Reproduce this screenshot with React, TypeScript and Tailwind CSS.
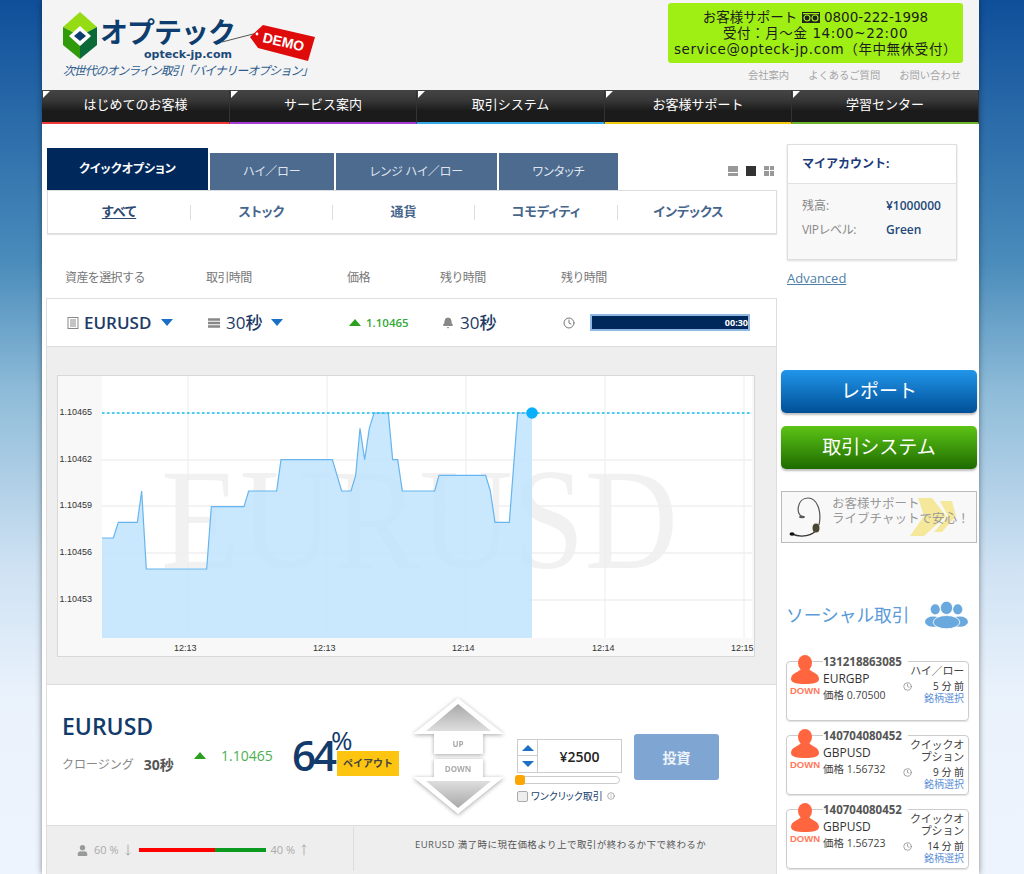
import { Bell, Clock, Info, MoveDown, MoveUp } from 'lucide-react';
import { FaUser } from 'react-icons/fa';

const navItems = [
  { label: 'はじめてのお客様', border: 'border-[#f03a3a]' },
  { label: 'サービス案内', border: 'border-[#a63bd8]' },
  { label: '取引システム', border: 'border-[#35a8e8]' },
  { label: 'お客様サポート', border: 'border-[#f2c80f]' },
  { label: '学習センター', border: 'border-[#6cb52d]' },
];

const categories = ['すべて', 'ストック', '通貨', 'コモディティ', 'インデックス'];

const trades = [
  { id: '131218863085', pair: 'EURGBP', price: '0.70500', kind: 'ハイ／ロー', ago: '5 分 前' },
  { id: '140704080452', pair: 'GBPUSD', price: '1.56732', kind: 'クイックオプション', ago: '9 分 前' },
  { id: '140704080452', pair: 'GBPUSD', price: '1.56723', kind: 'クイックオプション', ago: '14 分 前' },
];

// traced from the reference, in px relative to the chart box
const line = [
  [156, 504], [190, 504], [205, 457], [262, 457], [275, 363], [289, 597], [470, 597], [484, 410],
  [582, 410], [596, 363], [680, 363], [693, 269], [847, 269], [875, 363], [903, 363], [917, 316],
  [930, 175], [944, 269], [958, 175], [972, 129], [1015, 129], [1028, 269], [1043, 269], [1057, 363],
  [1154, 363], [1167, 316], [1307, 316], [1321, 363], [1335, 457], [1378, 457], [1403, 129], [1446, 129],
].map(([x, y]) => [x / 3 - 8, y / 3 - 6]);

function Chart() {
  const pts = line.map(([x, y]) => `${x},${y}`).join(' ');
  const yLabels = [
    ['1.10465', 37],
    ['1.10462', 84],
    ['1.10459', 130],
    ['1.10456', 177],
    ['1.10453', 224],
  ] as const;
  const xLabels = [
    ['12:13', 130, 128],
    ['12:13', 269, 267],
    ['12:14', 408, 406],
    ['12:14', 547, 546],
    ['12:15', 686, 685],
  ] as const;

  return (
    <svg width="696" height="280" className="block border border-[#d8d8d8] box-content">
      <rect width="696" height="280" fill="#f8f8f8" />
      <rect x="44" y="0" width="650" height="262" fill="#fff" />
      <text x="103" y="192" fontFamily="Liberation Serif" fontSize="143" fill="#000" opacity="0.05" textLength="517" lengthAdjust="spacingAndGlyphs">
        EURUSD
      </text>
      {xLabels.map(([, x]) => (
        <line key={x} x1={x} x2={x} y1="0" y2="262" stroke="#ececec" />
      ))}
      {yLabels.map(([, y]) => (
        <line key={y} x1="44" x2="694" y1={y} y2={y} stroke="#efefef" strokeWidth="1.5" />
      ))}
      <polygon points={`44,262 ${pts} 474,262`} fill="#bfe3fd" fillOpacity="0.85" />
      <polyline points={pts} fill="none" stroke="#66b5ee" strokeWidth="1.2" />
      <line x1="44" x2="694" y1="37" y2="37" stroke="#10c0f5" strokeWidth="1.6" strokeDasharray="2.5 2.5" />
      <circle cx="474" cy="37" r="5.8" fill="#0bb0fb" />
      {yLabels.map(([t, y]) => (
        <text key={y} x="1.5" y={y + 2} fontSize="9" fill="#333" fontFamily="Liberation Sans">
          {t}
        </text>
      ))}
      {xLabels.map(([t, , x], i) => (
        <text key={i} x={x - 12} y="275" fontSize="9" fill="#333" fontFamily="Liberation Sans">
          {t}
        </text>
      ))}
    </svg>
  );
}

function UpDown() {
  return (
    <svg width="96" height="122" className="drop-shadow-[0_1px_2px_rgba(0,0,0,0.35)]">
      <defs>
        <linearGradient id="ug" x1="0" y1="0" x2="0" y2="1">
          <stop offset="0" stopColor="#a8a8a8" />
          <stop offset="1" stopColor="#dedede" />
        </linearGradient>
        <linearGradient id="dg" x1="0" y1="0" x2="0" y2="1">
          <stop offset="0" stopColor="#dedede" />
          <stop offset="1" stopColor="#a8a8a8" />
        </linearGradient>
      </defs>
      <polygon points="47,2 93,38 72,38 72,58 23,58 23,38 2,38" fill="#fff" />
      <polygon points="47,8 80,35 15,35" fill="url(#ug)" />
      <polygon points="23,63 72,63 72,81 93,81 47,118 2,81 23,81" fill="#fff" />
      <polygon points="15,85 80,85 47,112" fill="url(#dg)" />
      <text x="47" y="51" textAnchor="middle" fontSize="8" fontWeight="700" fill="#aaa" fontFamily="Open Sans">UP</text>
      <text x="47" y="76" textAnchor="middle" fontSize="8" fontWeight="700" fill="#aaa" fontFamily="Open Sans">DOWN</text>
    </svg>
  );
}

function Logo() {
  return (
    <svg width="34" height="48" viewBox="0 0 34 48" className="shrink-0">
      <polygon points="17,0 34,15 17,24 0,15" fill="#96dc14" />
      <polygon points="0,15 17,24 17,47 0,33" fill="#2f9a0a" />
      <polygon points="34,15 17,24 17,47 34,33" fill="#0b6a38" />
      <polygon points="17,14 28,24 17,34 6,24" fill="#fff" />
      <polygon points="17,19 23,24 17,29 11,24" fill="#0d3d6e" />
    </svg>
  );
}

function Headset() {
  return (
    <svg width="36" height="42" viewBox="0 0 36 42" fill="none">
      <path d="M14 20 C6 18 8 1 19 1 C28 1 33 14 30 28" stroke="#555" strokeWidth="1.2" />
      <path d="M3 37 C12 41 24 39 28 32" stroke="#333" strokeWidth="1.4" />
      <ellipse cx="27" cy="31" rx="3.5" ry="4.5" fill="#4a4630" />
      <ellipse cx="3" cy="37" rx="2.5" ry="1.8" fill="#111" />
      <ellipse cx="13" cy="20" rx="3" ry="1.3" fill="#555" />
    </svg>
  );
}

function Dial() {
  return (
    <svg width="18" height="11" viewBox="0 0 18 11" className="inline-block align-[-1px]">
      <rect width="18" height="11" fill="#222" />
      <circle cx="5" cy="6" r="3" fill="none" stroke="#a0ef14" strokeWidth="1.2" />
      <circle cx="13" cy="6" r="3" fill="none" stroke="#a0ef14" strokeWidth="1.2" />
      <rect x="1" y="1" width="16" height="1.2" fill="#a0ef14" />
    </svg>
  );
}

function Avatar() {
  return (
    <svg width="28" height="29" viewBox="0 0 28 29">
      <ellipse cx="14" cy="8" rx="7" ry="8" fill="#ff6640" />
      <path d="M0 24 C0 18 8 17 10 14 H18 C20 17 28 18 28 24 C28 28 22 29 14 29 C6 29 0 28 0 24Z" fill="#ff6640" />
    </svg>
  );
}

function People() {
  return (
    <svg width="43" height="28" viewBox="0 0 42 27">
      <ellipse cx="10" cy="8" rx="4.5" ry="5" fill="#6aa9dd" />
      <ellipse cx="32" cy="8" rx="4.5" ry="5" fill="#6aa9dd" />
      <ellipse cx="8" cy="20" rx="8" ry="5" fill="#6aa9dd" />
      <ellipse cx="34" cy="20" rx="8" ry="5" fill="#6aa9dd" />
      <ellipse cx="21" cy="6.5" rx="6" ry="6.5" fill="#6aa9dd" stroke="#fff" strokeWidth="0.8" />
      <ellipse cx="21" cy="20.5" rx="13" ry="6.5" fill="#6aa9dd" stroke="#fff" strokeWidth="0.8" />
    </svg>
  );
}

function Caret({ className }: { className: string }) {
  return <span className={`inline-block w-0 h-0 border-l-[6.5px] border-r-[6.5px] border-t-[7px] border-l-transparent border-r-transparent border-t-[#1b6fc4] ${className}`} />;
}

function GreenUp() {
  return <span className="inline-block w-0 h-0 border-l-[6px] border-r-[6px] border-b-[7px] border-l-transparent border-r-transparent border-b-[#2ca01c]" />;
}

function ListIcon() {
  return (
    <svg width="12" height="12" viewBox="0 0 12 12" className="shrink-0">
      <rect x="1" y="0.5" width="10" height="11" fill="none" stroke="#888" />
      <path d="M3 3h6M3 5h6M3 7h6M3 9h6" stroke="#888" />
    </svg>
  );
}

function StackIcon() {
  return (
    <svg width="12" height="10" viewBox="0 0 12 10" className="shrink-0">
      <path d="M0 1.5h12M0 5h12M0 8.5h12" stroke="#888" strokeWidth="2.4" />
    </svg>
  );
}

function TradeCard({ id, pair, price, kind, ago }: (typeof trades)[number]) {
  return (
    <div className="relative h-[60px] w-[183px] ml-[5px] mb-[14px] border border-[#ccc] rounded-[4px] shadow-[0_1px_1px_rgba(0,0,0,0.12)] flex">
      <div className="w-[32px] ml-[2px] -mt-[7px] flex flex-col items-center shrink-0">
        <Avatar />
        <span className="text-[9.5px] leading-[10px] mt-[2px] font-bold text-[#ff7a5c] font-['Liberation_Sans',sans-serif]">DOWN</span>
      </div>
      <div className="ml-[2px] -mt-[6px] w-[84px] shrink-0">
        <div className="text-[11.5px] leading-[12px] font-bold text-[#555] bg-white pr-[6px] w-fit">{id}</div>
        <div className="text-[12px] leading-[14px] mt-[4px] text-[#333]">{pair}</div>
        <div className="text-[10.5px] leading-[14px] mt-[2px] text-[#444]">価格 {price}</div>
      </div>
      <div className="flex-1 -ml-[3px] pr-[5px] pt-[3px] text-right text-[11px]">
        <div className="leading-[12px] text-[#444] w-[60px] ml-auto tracking-[-0.2px]">{kind}</div>
        <div className="flex justify-between items-center leading-[13px] mt-[3px] text-[#333]">
          <Clock className="w-[9px] h-[9px] text-[#888] -ml-[1px]" />
          <span className="text-[10px]">{ago}</span>
        </div>
        <div className="text-[10px] leading-[11px] text-[#5c8fd6]">銘柄選択</div>
      </div>
    </div>
  );
}

export default function App() {
  return (
    <div className="h-screen overflow-hidden bg-[linear-gradient(180deg,#0f4f9a_0%,#4a8cbb_30%,#8fbcd9_45%,#cfe2f3_65%,#eaf2fc_80%,#eef4fd_100%)] font-['Open_Sans','Noto_Sans_CJK_JP',sans-serif]">
      <div className="w-[937px] ml-[42px] h-full bg-white shadow-[0_0_6px_rgba(0,0,0,0.45)]">
        {/* header */}
        <header className="h-[90px] bg-[#f4f4f4] flex justify-between">
          <div className="pl-[21px] pt-[12px] relative w-[300px]">
            <div className="flex items-start">
              <Logo />
              <div className="ml-[3px] mt-[2px]">
                <div className="text-[28px] leading-[36px] font-bold text-[#0d3d6e] tracking-[-1px] whitespace-nowrap">オプテック</div>
                <div className="text-[11px] leading-[10px] font-bold text-[#1d4a78] ml-[44px] font-['DejaVu_Sans',sans-serif] whitespace-nowrap">opteck-jp.com</div>
              </div>
            </div>
            <div className="text-[12px] leading-[14px] italic text-[#2d5c8c] mt-[4px] whitespace-nowrap tracking-[-1.15px]">次世代のオンライン取引「バイナリーオプション」</div>
            {/* demo tag */}
            <svg width="92" height="44" viewBox="0 0 92 44" className="absolute left-[182px] top-[22px] overflow-visible">
              <path d="M-2 20 L33 11" stroke="#555" strokeWidth="1" />
              <polygon points="26,15 39,3 91,15 84,39 34,26" fill="#df0a0a" />
              <circle cx="33" cy="12" r="1.4" fill="#fff" />
              <text x="38" y="20" fontSize="14" fontWeight="700" fill="#fff" fontFamily="Liberation Sans" transform="rotate(13 38 20)">DEMO</text>
            </svg>
          </div>
          <div className="pr-[16px] pt-[3px] flex flex-col items-end">
            <div className="w-[295px] h-[60px] bg-[#a0ef14] rounded-[3px] text-center text-[13.5px] leading-[16px] pt-[6px] text-[#1c1c1c] font-['DejaVu_Sans','Noto_Sans_CJK_JP',sans-serif] whitespace-nowrap">
              <div>お客様サポート <Dial /> 0800-222-1998</div>
              <div className="tracking-[0.6px]">受付：月～金 14:00~22:00</div>
              <div className="tracking-[0.6px]">service@opteck-jp.com（年中無休受付）</div>
            </div>
            <div className="flex gap-[19px] text-[10.3px] leading-[12px] mt-[6px] text-[#a5a5a5] pr-[2px]">
              <span>会社案内</span>
              <span>よくあるご質問</span>
              <span>お問い合わせ</span>
            </div>
          </div>
        </header>

        {/* nav */}
        <nav className="grid grid-cols-[188px_187px_188px_187px_187px] h-[34px]">
          {navItems.map((item) => (
            <div
              key={item.label}
              className={`relative flex items-center justify-center pb-[2px] text-white text-[13px] border-b-2 border-r border-r-[#333] bg-[linear-gradient(180deg,#454444_0%,#3a3939_30%,#1b1b1b_65%,#1a1a1a_100%)] ${item.border}`}
            >
              <span className="absolute left-[1px] top-px w-0 h-0 border-t-[7px] border-r-[7px] border-t-white border-r-transparent" />
              {item.label}
            </div>
          ))}
        </nav>

        <div className="flex">
          {/* left column */}
          <main className="w-[731px] ml-[4px] shrink-0">
            <div className="flex items-end mt-[24px] ml-px gap-[2px] [font-feature-settings:'palt']">
              <div className="w-[161px] h-[42px] bg-[#00285a] text-white text-[12px] font-bold flex items-center justify-center">クイックオプション</div>
              <div className="w-[124px] h-[37px] bg-[#4d6a8f] text-[#dfe5ee] text-[12px] flex items-center justify-center">ハイ／ロー</div>
              <div className="w-[161px] h-[37px] bg-[#4d6a8f] text-[#dfe5ee] text-[12px] flex items-center justify-center">レンジ ハイ／ロー</div>
              <div className="w-[119px] h-[37px] bg-[#4d6a8f] text-[#dfe5ee] text-[12px] flex items-center justify-center">ワンタッチ</div>
              <div className="flex-1 flex justify-end items-center gap-[8px] h-[37px] pr-[3px] pb-[2px]">
                <span className="w-[10px] h-[10px] bg-[linear-gradient(180deg,#999_0%,#999_55%,#fff_55%,#fff_68%,#999_68%)]" />
                <span className="w-[10px] h-[10px] bg-[#333]" />
                <span className="w-[10px] h-[10px] grid grid-cols-2 gap-px">
                  <span className="bg-[#999]" />
                  <span className="bg-[#999]" />
                  <span className="bg-[#999]" />
                  <span className="bg-[#999]" />
                </span>
              </div>
            </div>
            <div className="ml-px grid grid-cols-[143px_142px_142px_143px_1fr] pr-[17px] h-[44px] border border-[#ddd] shadow-[0_1px_1px_rgba(0,0,0,0.1)] items-center [font-feature-settings:'palt']">
              {categories.map((c, i) => (
                <div key={c} className={`h-[15px] flex items-center justify-center text-[13px] font-bold text-[#46658c] ${i < 4 ? 'border-r border-[#ddd]' : ''}`}>
                  <span className={i === 0 ? 'underline underline-offset-2 text-[#2c4a72]' : ''}>{c}</span>
                </div>
              ))}
            </div>

            <div className="grid grid-cols-[141px_141px_93px_121px_1fr] pl-[19px] h-[64px] items-center pt-[24px] text-[12px] text-[#777] tracking-[-0.6px]">
              <span>資産を選択する</span>
              <span>取引時間</span>
              <span>価格</span>
              <span>残り時間</span>
              <span>残り時間</span>
            </div>

            <div className="border border-[#ddd] border-b-0">
              <div className="grid grid-cols-[141px_141px_93px_121px_1fr] pl-[20px] h-[48px] items-center border-b border-[#ddd] text-[#1e3a66]">
                <div className="flex items-center">
                  <ListIcon />
                  <span className="ml-[5px] text-[17px] font-semibold">EURUSD</span>
                  <Caret className="ml-[10px]" />
                </div>
                <div className="flex items-center">
                  <StackIcon />
                  <span className="ml-[6px] text-[17px] font-medium">30秒</span>
                  <Caret className="ml-[9px]" />
                </div>
                <div className="flex items-center text-[11.5px] font-semibold text-[#35a838]">
                  <GreenUp />
                  <span className="ml-[5px]">1.10465</span>
                </div>
                <div className="flex items-center">
                  <Bell className="w-[12px] h-[12px] text-[#888] fill-[#888]" />
                  <span className="ml-[6px] text-[17px] font-medium">30秒</span>
                </div>
                <div className="flex items-center">
                  <Clock className="w-[12px] h-[12px] text-[#777]" />
                  <div className="ml-[15px] w-[160px] h-[17px] border-2 border-[#8fb9e2] bg-[#00285a] text-white text-[9px] leading-[13px] font-bold text-right">00:30</div>
                </div>
              </div>
              <div className="bg-[#eeeeee] h-[338px] pt-[28px] pl-[10px] border-b border-[#ddd]">
                <Chart />
              </div>
              <div className="h-[141px] flex border-b border-[#ddd]">
                <div className="w-[130px] shrink-0 pl-[15px] pt-[26px]">
                  <div className="text-[23px] leading-[30px] font-semibold text-[#123a6b]">EURUSD</div>
                  <div className="flex mt-[15px] text-[12px] leading-[18px] whitespace-nowrap">
                    <span className="text-[#888]">クロージング</span>
                    <span className="ml-[10px] font-bold text-[#555] text-[14px]">30秒</span>
                  </div>
                </div>
                <div className="w-[115px] shrink-0 pt-[61px] pl-[17px] flex items-start text-[14px] leading-[20px] text-[#4cb050]">
                  <span className="mt-[6px] flex"><GreenUp /></span>
                  <span className="ml-[15px]">1.10465</span>
                </div>
                <div className="relative w-[119px] shrink-0">
                  <span className="absolute left-0 top-[41px] text-[42px] leading-[58px] font-semibold text-[#123a6b] tracking-[-3px]">64</span>
                  <span className="absolute left-[39px] top-[40px] text-[26px] leading-[30px] text-[#123a6b] tracking-[-1px]">%</span>
                  <span className="absolute left-[45px] top-[66px] w-[62px] h-[25px] bg-[#fdc50f] text-[10px] font-bold text-[#444] flex items-center justify-center">ペイアウト</span>
                </div>
                <div className="w-[106px] shrink-0 pt-[11px]">
                  <UpDown />
                </div>
                <div className="w-[117px] shrink-0 pt-[54px]">
                  <div className="w-[105px] h-[34px] border border-[#ccc] flex">
                    <div className="w-[20px] border-r border-[#ccc] flex flex-col">
                      <div className="h-1/2 border-b border-[#ccc] flex items-center justify-center">
                        <span className="w-0 h-0 border-l-[6px] border-r-[6px] border-b-[6px] border-l-transparent border-r-transparent border-b-[#1b6fc4]" />
                      </div>
                      <div className="h-1/2 flex items-center justify-center">
                        <span className="w-0 h-0 border-l-[6px] border-r-[6px] border-t-[6px] border-l-transparent border-r-transparent border-t-[#1b6fc4]" />
                      </div>
                    </div>
                    <div className="flex-1 flex items-center justify-center text-[14px] font-semibold text-[#222]">¥2500</div>
                  </div>
                  <div className="relative -ml-[2px] w-[105px] h-[8px] mt-[3px] border border-[#ccc] rounded-full">
                    <span className="absolute -left-px -top-[2px] w-[10px] h-[10px] rounded-[3px] bg-[#f9a606]" />
                  </div>
                  <div className="flex items-center mt-[6px] whitespace-nowrap">
                    <span className="w-[11px] h-[11px] border border-[#aaa] rounded-[2px] bg-[#eee]" />
                    <span className="ml-[3px] text-[10px] leading-[12px] text-[#20416e] [font-feature-settings:'palt']">ワンクリック取引</span>
                    <Info className="ml-[4px] w-[8px] h-[8px] text-[#888]" />
                  </div>
                </div>
                <div className="pt-[49px]">
                  <div className="w-[85px] h-[46px] rounded-[3px] bg-[#7fa6d3] text-[#eef3f9] text-[14px] font-bold flex items-center justify-center">投資</div>
                </div>
              </div>
              <div className="h-[49px] bg-[#eeeeee] flex">
                <div className="w-[307px] shrink-0 border-r border-[#ddd] pl-[30px] flex items-center text-[11px] text-[#aaa] mb-[4px] mt-[1px] pt-[2px]">
                  <FaUser className="w-[11px] h-[11px] text-[#999]" />
                  <span className="ml-[6px]">60 %</span>
                  <MoveDown className="ml-[3px] w-[12px] h-[14px] text-[#888]" strokeWidth={1.2} />
                  <div className="ml-[5px] w-[127px] h-[4px] bg-[linear-gradient(90deg,#f00_0%,#f00_60%,#0a9a20_60%,#0a9a20_100%)]" />
                  <span className="ml-[5px]">40 %</span>
                  <MoveUp className="ml-[3px] w-[12px] h-[14px] text-[#888]" strokeWidth={1.2} />
                </div>
                <div className="pl-[61px] pt-[12px] text-[9.5px] leading-[14px] text-[#555] tracking-[0.45px] whitespace-nowrap">EURUSD 満了時に現在価格より上で取引が終わるか下で終わるか</div>
              </div>
            </div>
          </main>

          {/* right column */}
          <aside className="flex-1 ml-[4px] pr-[2px]">
            <div className="ml-[6px] mt-[20px] w-[170px] h-[116px] border border-[#ddd] shadow-[0_1px_2px_rgba(0,0,0,0.15)] bg-[#f8f8f8]">
              <div className="h-[39px] bg-white border-b border-[#e2e2e2] pl-[14px] flex items-center text-[12px] font-bold text-[#1b3a7a]">マイアカウント:</div>
              <div className="pl-[14px] pt-[10px] text-[12px] leading-[24px]">
                <div className="flex text-[#888]"><span className="w-[84px]">残高:</span><span className="font-semibold text-[#244a78]">¥1000000</span></div>
                <div className="flex text-[#888] tracking-[-0.4px]"><span className="w-[84px]">VIPレベル:</span><span className="font-semibold text-[#244a78] tracking-normal">Green</span></div>
              </div>
            </div>
            <div className="ml-[6px] mt-[9px] text-[13px] leading-[19px] text-[#4f7fa8] underline">Advanced</div>

            <div className="mt-[82px] h-[43px] rounded-[5px] bg-[linear-gradient(180deg,#2196ea_0%,#004f96_100%)] shadow-[0_2px_2px_rgba(0,0,0,0.25)] text-white text-[19px] flex items-center justify-center">レポート</div>
            <div className="mt-[13px] h-[43px] rounded-[5px] bg-[linear-gradient(180deg,#5cc416_0%,#1d6b00_100%)] shadow-[0_2px_2px_rgba(0,0,0,0.25)] text-white text-[19px] flex items-center justify-center">取引システム</div>

            <div className="relative mt-[22px] h-[52px] border border-[#bbb] bg-[#f8f8f8] flex items-start pt-[5px] overflow-hidden">
              <div className="ml-[7px]"><Headset /></div>
              <svg width="46" height="40" viewBox="0 0 46 40" className="absolute left-[128px] top-[6px]">
                <polygon points="8,0 22,0 36,18 14,38 0,38 14,18" fill="#f5e89a" />
                <polygon points="30,3 42,3 46,18 32,34 24,34 38,18" fill="#f5e89a" />
              </svg>
              <div className="relative ml-[7px] -mt-[1px] text-[12.5px] leading-[15px] text-[#999] whitespace-nowrap">
                <div>お客様サポート</div>
                <div>ライブチャットで安心！</div>
              </div>
            </div>

            <div className="mt-[57px] flex items-center pl-[5px] h-[30px]">
              <span className="text-[17.7px] text-[#5b9bd8]">ソーシャル取引</span>
              <span className="ml-[16px] flex"><People /></span>
            </div>
            <div className="mt-[31px]">
              {trades.map((t, i) => (
                <TradeCard key={i} {...t} />
              ))}
            </div>
          </aside>
        </div>
      </div>
    </div>
  );
}
